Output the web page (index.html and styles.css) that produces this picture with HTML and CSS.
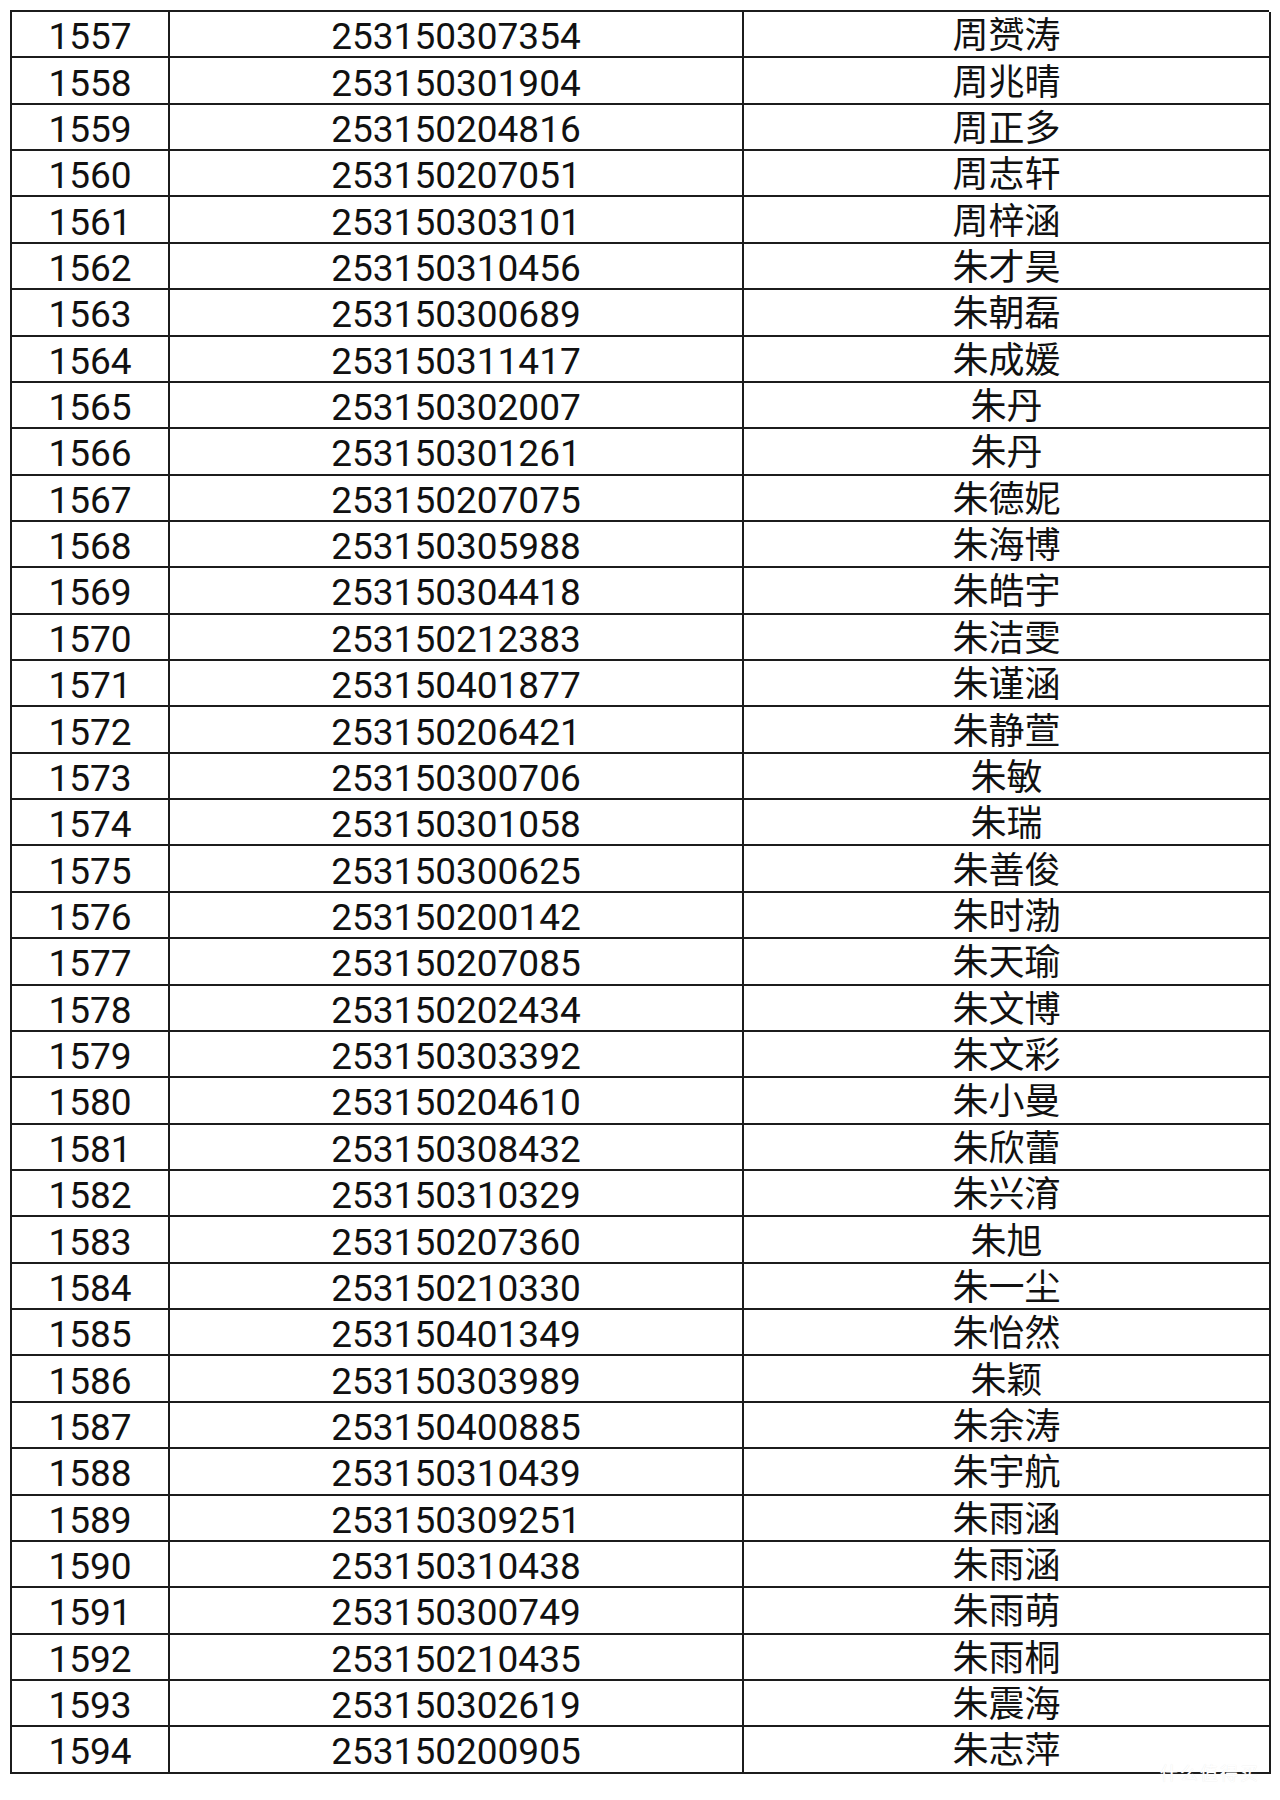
FILE: index.html
```html
<!DOCTYPE html>
<html lang="zh">
<head>
<meta charset="utf-8">
<title>名单</title>
<link rel="stylesheet" href="styles.css">
</head>
<body>
<div class="page">
<div class="sheet">
<div class="c">1557</div><div class="c">253150307354</div><div class="c">周赟涛</div>
<div class="c">1558</div><div class="c">253150301904</div><div class="c">周兆晴</div>
<div class="c">1559</div><div class="c">253150204816</div><div class="c">周正多</div>
<div class="c">1560</div><div class="c">253150207051</div><div class="c">周志轩</div>
<div class="c">1561</div><div class="c">253150303101</div><div class="c">周梓涵</div>
<div class="c">1562</div><div class="c">253150310456</div><div class="c">朱才昊</div>
<div class="c">1563</div><div class="c">253150300689</div><div class="c">朱朝磊</div>
<div class="c">1564</div><div class="c">253150311417</div><div class="c">朱成媛</div>
<div class="c">1565</div><div class="c">253150302007</div><div class="c">朱丹</div>
<div class="c">1566</div><div class="c">253150301261</div><div class="c">朱丹</div>
<div class="c">1567</div><div class="c">253150207075</div><div class="c">朱德妮</div>
<div class="c">1568</div><div class="c">253150305988</div><div class="c">朱海博</div>
<div class="c">1569</div><div class="c">253150304418</div><div class="c">朱皓宇</div>
<div class="c">1570</div><div class="c">253150212383</div><div class="c">朱洁雯</div>
<div class="c">1571</div><div class="c">253150401877</div><div class="c">朱谨涵</div>
<div class="c">1572</div><div class="c">253150206421</div><div class="c">朱静萱</div>
<div class="c">1573</div><div class="c">253150300706</div><div class="c">朱敏</div>
<div class="c">1574</div><div class="c">253150301058</div><div class="c">朱瑞</div>
<div class="c">1575</div><div class="c">253150300625</div><div class="c">朱善俊</div>
<div class="c">1576</div><div class="c">253150200142</div><div class="c">朱时渤</div>
<div class="c">1577</div><div class="c">253150207085</div><div class="c">朱天瑜</div>
<div class="c">1578</div><div class="c">253150202434</div><div class="c">朱文博</div>
<div class="c">1579</div><div class="c">253150303392</div><div class="c">朱文彩</div>
<div class="c">1580</div><div class="c">253150204610</div><div class="c">朱小曼</div>
<div class="c">1581</div><div class="c">253150308432</div><div class="c">朱欣蕾</div>
<div class="c">1582</div><div class="c">253150310329</div><div class="c">朱兴淯</div>
<div class="c">1583</div><div class="c">253150207360</div><div class="c">朱旭</div>
<div class="c">1584</div><div class="c">253150210330</div><div class="c">朱一尘</div>
<div class="c">1585</div><div class="c">253150401349</div><div class="c">朱怡然</div>
<div class="c">1586</div><div class="c">253150303989</div><div class="c">朱颖</div>
<div class="c">1587</div><div class="c">253150400885</div><div class="c">朱余涛</div>
<div class="c">1588</div><div class="c">253150310439</div><div class="c">朱宇航</div>
<div class="c">1589</div><div class="c">253150309251</div><div class="c">朱雨涵</div>
<div class="c">1590</div><div class="c">253150310438</div><div class="c">朱雨涵</div>
<div class="c">1591</div><div class="c">253150300749</div><div class="c">朱雨萌</div>
<div class="c">1592</div><div class="c">253150210435</div><div class="c">朱雨桐</div>
<div class="c">1593</div><div class="c">253150302619</div><div class="c">朱震海</div>
<div class="c">1594</div><div class="c">253150200905</div><div class="c">朱志萍</div>
</div>
<div class="mark">什么值得买</div>
</div>
</body>
</html>
```
FILE: styles.css
```css
html, body {
  margin: 0;
  padding: 0;
  background: #ffffff;
}
.page {
  position: relative;
  width: 1280px;
  height: 1800px;
  padding: 10px 0 0 10px;
  box-sizing: border-box;
}
.sheet {
  display: grid;
  grid-template-columns: 158px 574px 527px;
  grid-auto-rows: 46.37px;
  width: 1259px;
  border-top: 2px solid #1c1c1c;
  border-left: 2px solid #1c1c1c;
  box-sizing: border-box;
  font-family: "Roboto", "Noto Sans CJK SC", sans-serif;
  font-size: 37px;
  color: #111111;
}
.c {
  display: flex;
  align-items: center;
  justify-content: center;
  border-right: 2px solid #1c1c1c;
  border-bottom: 2px solid #1c1c1c;
  line-height: 1;
  padding-top: 5px;
  box-sizing: border-box;
  overflow: hidden;
  white-space: nowrap;
}
.c:nth-child(3n) {
  font-size: 36px;
  padding-top: 4px;
}
.mark {
  position: absolute;
  left: 1160px;
  top: 1761px;
  width: 106px;
  height: 22px;
  font-family: "Noto Sans CJK SC", sans-serif;
  font-size: 18px;
  line-height: 22px;
  color: #ffffff;
  text-shadow: 0 0 1px #e6e6e6;
  letter-spacing: 2px;
}
```
